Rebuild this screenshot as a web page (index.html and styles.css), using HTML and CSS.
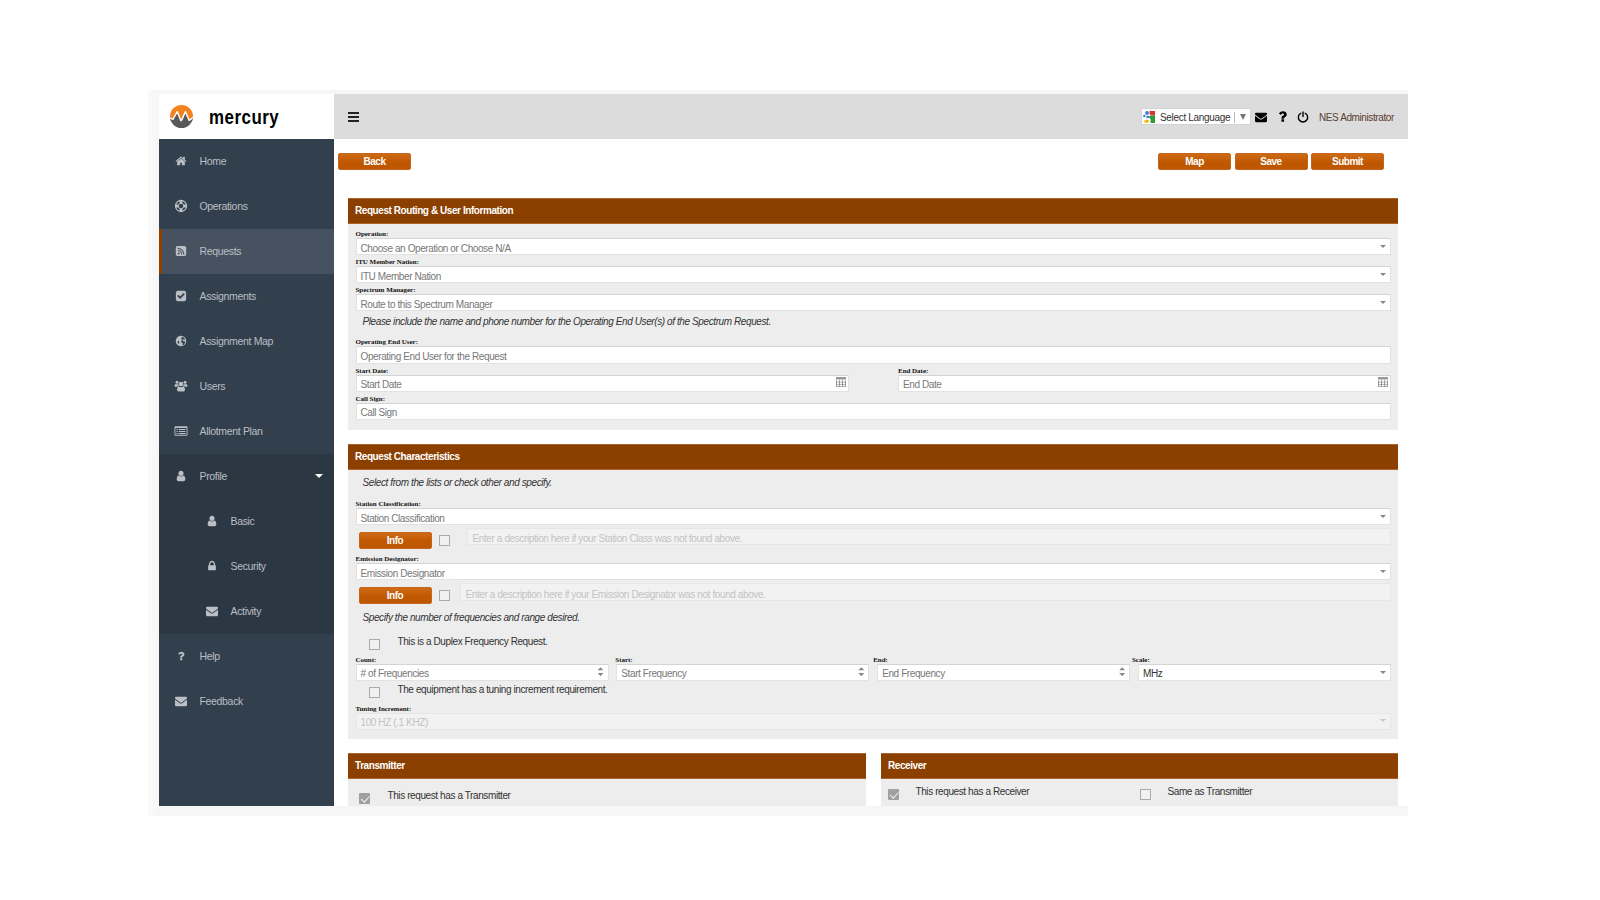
FILE: index.html
```
<!DOCTYPE html>
<html lang="en">
<head>
    <meta charset="UTF-8">
    <meta name="viewport" content="width=device-width, initial-scale=1.0">
    <title>Mercury - Spectrum Request</title>
    <link rel="stylesheet" href="styles.css">
</head>
<body>
    <!-- shared icons -->
    <svg class="sprite" viewBox="0 0 1792 1792">
        <symbol id="envelope" viewBox="0 0 1792 1792"><path d="M1792 710v794q0 66-47 113t-113 47h-1472q-66 0-113-47t-47-113v-794q44 49 101 87 362 246 497 345 57 42 92.5 65.5t94.5 48 110 24.5h2q51 0 110-24.5t94.5-48 92.5-65.5q170-123 498-345 57-39 100-87zm0-294q0 79-49 151t-122 123q-376 261-468 325-10 7-42.5 31t-54 38.5-52 32.5-57.5 27-50 9h-2q-23 0-50-9t-57.5-27-52-32.5-54-38.5-42.5-31q-91-64-262-182.5t-205-142.5q-62-42-117-115.5t-55-136.5q0-78 41.5-130t118.5-52h1472q65 0 112.5 47t47.5 113z"/></symbol>
        <symbol id="user" viewBox="0 0 1792 1792"><path d="M1536 1399q0 109-62.5 187t-150.5 78h-854q-88 0-150.5-78t-62.5-187q0-85 8.5-160.5t31.5-152 58.5-131 94-89 134.5-34.5q131 128 313 128t313-128q76 0 134.5 34.5t94 89 58.5 131 31.5 152 8.5 160.5zm-256-887q0 159-112.5 271.5t-271.5 112.5-271.5-112.5-112.5-271.5 112.5-271.5 271.5-112.5 271.5 112.5 112.5 271.5z"/></symbol>
        <symbol id="question" viewBox="0 0 1792 1792"><path d="M1088 1256v240q0 16-12 28t-28 12h-240q-16 0-28-12t-12-28v-240q0-16 12-28t28-12h240q16 0 28 12t12 28zm316-600q0 54-15.5 101t-35 76.5-55 59.5-57.5 43.5-61 35.5q-41 23-68.5 65t-27.5 67q0 17-12 32.5t-28 15.5h-240q-15 0-25.5-18.5t-10.5-37.5v-45q0-83 65-156.5t143-108.5q59-27 84-56t25-76q0-42-46.5-74t-107.5-32q-65 0-108 29-35 25-107 115-13 16-31 16-12 0-25-8l-164-125q-13-10-15.5-25t5.5-28q160-266 464-266 80 0 161 31t146 83 106 127.5 41 158.5z"/></symbol>
        <symbol id="calendar" viewBox="0 0 10 10"><path d="M0 0h10v2.4H0zM0 3.2h1v6.8H0zM3 3.2h1v6.8H3zM6 3.2h1v6.8H6zM9 3.2h1v6.8H9zM0 4.7h10v.8H0zM0 7h10v.8H0zM0 9.2h10v.8H0z"/></symbol>
    </svg>

    <div class="frame">
        <div class="app">
            <aside class="sidebar">
                <div class="brand">
                    <svg class="logo" viewBox="0 0 24 24">
                        <defs>
                            <clipPath id="disc"><circle cx="12" cy="12" r="12"/></clipPath>
                        </defs>
                        <g clip-path="url(#disc)">
                            <rect width="24" height="17" fill="#f58220"/>
                            <path d="M0 13.500l3 1.500L7.600 7l3.800 9 1.200-2L16 7l4 8.500 4-2.500v11H0z" fill="#58595b"/>
                            <path d="M-1 13l4 2L7.600 7l3.800 9.500 1.200-1.500L16 7l4 9 5-3.500" fill="none" stroke="#fff" stroke-width="1.500" stroke-linejoin="round"/>
                        </g>
                    </svg>
                    <span class="brand-name">mercury</span>
                </div>
                <nav class="menu">
                    <a class="item">
                        <svg class="icon" viewBox="0 0 1792 1792"><path d="M1472 992v480q0 26-19 45t-45 19h-384v-384h-256v384h-384q-26 0-45-19t-19-45v-480q0-1 .5-3t.5-3l575-474 575 474q1 2 1 6zm223-69l-62 74q-8 9-21 11h-3q-13 0-21-7l-692-577-692 577q-12 8-24 7-13-2-21-11l-62-74q-8-10-7-23.5t11-21.5l719-599q32-26 76-26t76 26l244 204v-195q0-14 9-23t23-9h192q14 0 23 9t9 23v408l219 182q10 8 11 21.5t-7 23.5z"/></svg>
                        Home
                    </a>
                    <a class="item">
                        <svg class="icon" viewBox="0 0 24 24"><g fill="none" stroke="currentColor"><circle cx="12" cy="12" r="11.2" stroke-width="2.2"/><circle cx="12" cy="12" r="5.6" stroke-width="2"/></g><path d="M8.500 2h7l-1.200 5H9.700zM8.500 22h7l-1.200-5H9.700zM2 8.500v7l5-1.200V9.700zM22 8.500v7l-5-1.200V9.700z"/></svg>
                        Operations
                    </a>
                    <a class="item active">
                        <svg class="icon" viewBox="0 0 24 24"><path fill-rule="evenodd" d="M5 2h14a3.400 3.400 0 0 1 3.400 3.400v13.200a3.400 3.400 0 0 1-3.400 3.400H5a3.400 3.400 0 0 1-3.400-3.400V5.400A3.400 3.400 0 0 1 5 2zM7.300 15.200a1.900 1.900 0 1 0 .01 0zM5.400 9.800v2.200a7 7 0 0 1 6.900 7h2.200a9.200 9.200 0 0 0-9.100-9.200zM5.400 5.500v2.200A11.300 11.300 0 0 1 16.600 19h2.200A13.500 13.500 0 0 0 5.400 5.500z"/></svg>
                        Requests
                    </a>
                    <a class="item">
                        <svg class="icon" viewBox="0 0 1792 1792"><path d="M813 1299l614-614q19-19 19-45t-19-45l-102-102q-19-19-45-19t-45 19l-467 467-211-211q-19-19-45-19t-45 19l-102 102q-19 19-19 45t19 45l358 358q19 19 45 19t45-19zm851-883v960q0 119-84.500 203.500t-203.500 84.500h-960q-119 0-203.500-84.500t-84.500-203.500v-960q0-119 84.500-203.500t203.500-84.500h960q119 0 203.500 84.500t84.500 203.500z"/></svg>
                        Assignments
                    </a>
                    <a class="item">
                        <svg class="icon" viewBox="0 0 24 24"><path fill-rule="evenodd" d="M12 1.500a10.500 10.500 0 1 0 .01 0zM14 3.500l4 2 2 3-1.500 1-2-1-2 1.500 1 2 3.500.500 1.500 2-2.500 4.500-3 2 .500-4-2.500-2.500-.500-3 1.500-3.500-1.500-1.500zM5 12l2 0 2 2-.500 2-1 2-2-3z"/></svg>
                        Assignment Map
                    </a>
                    <a class="item">
                        <svg class="icon" viewBox="0 0 24 24"><circle cx="4" cy="4.500" r="3"/><circle cx="20" cy="4.500" r="3"/><circle cx="12" cy="8" r="4.500"/><path d="M1 8q3 1.500 5.500-.2Q6.500 11 8.500 12.700H5.500q-2 0-3 1.300Q-1 14-1 11.500-1 9 1 8zM23 8q-3 1.500-5.500-.2.000 3.200-2 4.900h3q2 0 3 1.300 3.500 0 3.500-2.500Q25 9 23 8zM8 13q4 2.500 8 0 4 .500 4 6.500 0 3.500-3 3.500H7q-3 0-3-3.500Q4 13.500 8 13z"/></svg>
                        Users
                    </a>
                    <a class="item">
                        <svg class="icon" viewBox="0 0 24 24"><path fill-rule="evenodd" d="M1 2.500h22q2 0 2 2v15q0 2-2 2H1q-2 0-2-2v-15q0-2 2-2zM.800 6v13.700h22.400V6zM3 8h2.500v2H3zM3 12h2.500v2H3zM3 16h2.500v2H3zM7.500 8H21v2H7.500zM7.500 12H21v2H7.500zM7.500 16H21v2H7.500z"/></svg>
                        Allotment Plan
                    </a>
                    <div class="group">
                        <a class="item">
                            <svg class="icon"><use href="#user"/></svg>
                            Profile
                            <span class="caret"></span>
                        </a>
                        <a class="item sub">
                            <svg class="icon"><use href="#user"/></svg>
                            Basic
                        </a>
                        <a class="item sub">
                            <svg class="icon" viewBox="0 0 1792 1792"><path d="M640 768h512v-192q0-106-75-181t-181-75-181 75-75 181v192zm832 96v576q0 40-28 68t-68 28h-960q-40 0-68-28t-28-68v-576q0-40 28-68t68-28h32v-192q0-184 132-316t316-132 316 132 132 316v192h32q40 0 68 28t28 68z"/></svg>
                            Security
                        </a>
                        <a class="item sub">
                            <svg class="icon"><use href="#envelope"/></svg>
                            Activity
                        </a>
                    </div>
                    <a class="item">
                        <svg class="icon"><use href="#question"/></svg>
                        Help
                    </a>
                    <a class="item">
                        <svg class="icon"><use href="#envelope"/></svg>
                        Feedback
                    </a>
                </nav>
            </aside>

            <div class="main">
                <header class="topbar">
                    <div class="burger"><span></span><span></span><span></span></div>
                    <div class="language">
                        <svg class="google" viewBox="0 0 12 12">
                            <rect width="12" height="12" fill="#fff"/>
                            <path d="M6.500 0H12v4.500H8.500L6.500 3z" fill="#e0322b"/>
                            <path d="M7.500 4.500H12V12H7.500V8L5.500 6z" fill="#2e9b3b"/>
                            <circle cx="4" cy="2" r="1.900" fill="#3a7be0"/>
                            <circle cx="1.300" cy="5" r="1.200" fill="#3a7be0"/>
                            <path d="M3 5.500l3-1v2L4 7.500z" fill="#3a7be0"/>
                            <ellipse cx="3.600" cy="10.200" rx="2.500" ry="1.500" fill="#f5b400"/>
                        </svg>
                        <span class="language-text">Select Language</span>
                        <span class="language-arrow"></span>
                    </div>
                    <svg class="top-icon mail"><use href="#envelope"/></svg>
                    <svg class="top-icon help"><use href="#question"/></svg>
                    <svg class="top-icon power" viewBox="0 0 24 24"><path d="M7.500 4.500a9.300 9.300 0 1 0 9 0M12 2v9" fill="none" stroke="#000" stroke-width="2.800" stroke-linecap="round"/></svg>
                    <span class="username">NES Administrator</span>
                </header>

                <div class="toolbar">
                    <button class="btn">Back</button>
                    <div class="actions">
                        <button class="btn">Map</button>
                        <button class="btn">Save</button>
                        <button class="btn">Submit</button>
                    </div>
                </div>

                <section class="panel routing">
                    <h2>Request Routing &amp; User Information</h2>
                    <div class="panel-body">
                        <label>Operation:</label>
                        <div class="field select">Choose an Operation or Choose N/A</div>
                        <label>ITU Member Nation:</label>
                        <div class="field select">ITU Member Nation</div>
                        <label>Spectrum Manager:</label>
                        <div class="field select">Route to this Spectrum Manager</div>
                        <p class="hint wide-hint">Please include the name and phone number for the Operating End User(s) of the Spectrum Request.</p>
                        <label>Operating End User:</label>
                        <div class="field">Operating End User for the Request</div>
                        <div class="dates">
                            <div>
                                <label>Start Date:</label>
                                <div class="field">Start Date <svg class="calendar"><use href="#calendar"/></svg></div>
                            </div>
                            <div>
                                <label>End Date:</label>
                                <div class="field">End Date <svg class="calendar"><use href="#calendar"/></svg></div>
                            </div>
                        </div>
                        <label>Call Sign:</label>
                        <div class="field">Call Sign</div>
                    </div>
                </section>

                <section class="panel characteristics">
                    <h2>Request Characteristics</h2>
                    <div class="panel-body">
                        <p class="hint first-hint">Select from the lists or check other and specify.</p>
                        <label>Station Classification:</label>
                        <div class="field select">Station Classification</div>
                        <div class="other">
                            <button class="btn">Info</button>
                            <span class="check"></span>
                            <div class="field disabled station-other">Enter a description here if your Station Class was not found above.</div>
                        </div>
                        <label>Emission Designator:</label>
                        <div class="field select">Emission Designator</div>
                        <div class="other">
                            <button class="btn">Info</button>
                            <span class="check"></span>
                            <div class="field disabled emission-other">Enter a description here if your Emission Designator was not found above.</div>
                        </div>
                        <p class="hint range-hint">Specify the number of frequencies and range desired.</p>
                        <div class="check-row duplex">
                            <span class="check"></span>
                            <span class="check-text">This is a Duplex Frequency Request.</span>
                        </div>
                        <div class="range">
                            <div>
                                <label>Count:</label>
                                <div class="field spinner"># of Frequencies</div>
                            </div>
                            <div>
                                <label class="out">Start:</label>
                                <div class="field spinner">Start Frequency</div>
                            </div>
                            <div>
                                <label class="out-more">End:</label>
                                <div class="field spinner">End Frequency</div>
                            </div>
                            <div>
                                <label class="out-most">Scale:</label>
                                <div class="field select filled">MHz</div>
                            </div>
                        </div>
                        <div class="check-row tuning">
                            <span class="check"></span>
                            <span class="check-text">The equipment has a tuning increment requirement.</span>
                        </div>
                        <label>Tuning Increment:</label>
                        <div class="field select disabled tuning-value">100 HZ (.1 KHZ)</div>
                    </div>
                </section>

                <div class="columns">
                    <section class="panel">
                        <h2>Transmitter</h2>
                        <div class="panel-body equipment transmitter">
                            <span class="check checked"></span>
                            <span class="check-text">This request has a Transmitter</span>
                        </div>
                    </section>
                    <section class="panel">
                        <h2>Receiver</h2>
                        <div class="panel-body equipment receiver">
                            <span class="check checked"></span>
                            <span class="check-text">This request has a Receiver</span>
                            <span class="check"></span>
                            <span class="check-text">Same as Transmitter</span>
                        </div>
                    </section>
                </div>
            </div>
        </div>
    </div>
</body>
</html>
```

FILE: styles.css
```
* {
    box-sizing: border-box;
}
body {
    margin: 0;
    height: 900px;
    overflow: hidden;
    background: #fff;
    font-family: "Liberation Sans", Arial, sans-serif;
    font-size: 10px;
    letter-spacing: -0.4px;
}
.sprite {
    display: none;
}
.frame {
    width: 1260px;
    height: 726px;
    margin: 90px 0 0 148px;
    padding: 4px 0 10px 10.5px;
    background: linear-gradient(to right, #fafafa, #f6f6f6 11px);
}
.app {
    display: flex;
    height: 712px;
    overflow: hidden;
    background: #fff;
}

/* sidebar */
.sidebar {
    width: 175.5px;
    background: #323f4c;
}
.brand {
    display: flex;
    align-items: center;
    height: 45px;
    padding-left: 11px;
    background: #fff;
}
.logo {
    width: 23px;
    height: 23px;
}
.brand-name {
    margin: 1px 0 0 16px;
    font-size: 20px;
    font-weight: bold;
    letter-spacing: 0.6px;
    color: #000;
    transform: scaleX(0.845);
    transform-origin: left;
}
.item {
    display: flex;
    align-items: center;
    height: 45px;
    padding: 0 11px 1px 16.5px;
    font-size: 10.5px;
    letter-spacing: -0.33px;
    color: #b9bfc5;
}
.icon {
    width: 12px;
    height: 12px;
    margin-right: 12.5px;
    overflow: visible;
    fill: currentColor;
}
.item.active {
    padding-left: 13.5px;
    border-left: 3px solid #8b4000;
    background: #475260;
}
.group {
    background: #2c3744;
}
.item.sub {
    padding-left: 47.5px;
}
.caret {
    margin-left: auto;
    border: 4px solid transparent;
    border-top-color: #fff;
    border-bottom: 0;
}

/* top bar */
.main {
    flex: 1;
    min-width: 0;
}
.topbar {
    display: flex;
    align-items: center;
    height: 45px;
    padding: 0 14px 0 13.5px;
    background: #dcdcdc;
}
.burger span {
    display: block;
    width: 11px;
    height: 2px;
    margin: 2px 0;
    background: #222;
}
.language {
    display: flex;
    align-items: center;
    width: 110px;
    height: 17px;
    margin-left: auto;
    padding: 1px 0 0 1px;
    border: 1px solid #d2d2d2;
    background: #fff;
    color: #333;
}
.google {
    width: 12px;
    height: 12px;
}
.language-text {
    width: 75px;
    margin-left: 5px;
    border-right: 1px solid #bbb;
    letter-spacing: -0.32px;
}
.language-arrow {
    margin-left: 5px;
    border: 3px solid transparent;
    border-top: 6px solid #777;
    border-bottom: 0;
}
.top-icon {
    width: 12px;
    height: 12px;
}
.mail {
    margin-left: 4px;
}
.help {
    width: 15px;
    height: 15px;
    margin-left: 7.5px;
}
.power {
    width: 12px;
    margin-left: 7.5px;
}
.username {
    width: 75px;
    margin: 1px 0 0 10px;
    white-space: nowrap;
    color: #5a4030;
}

/* buttons */
.toolbar {
    display: flex;
    justify-content: space-between;
    padding: 14px 24px 0 4px;
}
.actions {
    display: flex;
    gap: 3.5px;
}
.btn {
    width: 73px;
    height: 17px;
    padding: 0;
    border: 1px solid #c4661c;
    border-radius: 2px;
    background: linear-gradient(#cf6a14, #bf5600 60%);
    color: #fff;
    font: bold 10px "Liberation Sans", Arial, sans-serif;
    letter-spacing: -0.5px;
}

/* panels */
.panel {
    background: #ededed;
}
.panel h2 {
    height: 26px;
    margin: 0;
    padding-left: 7px;
    border: 1px solid #a9652c;
    border-width: 1px 0;
    background: #8b4000;
    color: #fff;
    font-size: 10px;
    line-height: 24px;
    letter-spacing: -0.43px;
}
.panel-body {
    padding: 3px 7px 0 7.5px;
}
.routing {
    height: 232px;
    margin: 28px 10px 14px 14px;
}
.characteristics {
    height: 295px;
    margin: 0 10px 14px 14px;
}
label {
    display: block;
    height: 11px;
    color: #111;
    font: bold 7px/15px "Liberation Serif", "Times New Roman", serif;
    letter-spacing: -0.03px;
    white-space: nowrap;
}
.field {
    display: flex;
    align-items: center;
    height: 17.15px;
    padding: 3px 7px 0 4px;
    border: 1px solid #e2e2e2;
    border-top-color: #d4d4d4;
    background: #fff;
    color: #777;
    white-space: nowrap;
}
.select::after {
    content: "";
    margin: -3px -3px 0 auto;
    border: 3px solid transparent;
    border-top-color: #888;
    border-bottom: 0;
}
.filled {
    color: #333;
}
.disabled {
    background: #f2f2f2;
    border-color: #e6e6e6;
    color: #c3c3c3;
}
.disabled::after {
    border-top-color: #c8c8c8;
}
.spinner::after {
    content: "";
    width: 6px;
    height: 9px;
    margin: -4px -3px 0 auto;
    background: #888;
    clip-path: polygon(50% 0, 100% 35%, 0 35%, 0 65%, 100% 65%, 50% 100%, 0 65%, 0 35%);
}
.range .field,
.tuning-value {
    padding-top: 2px;
}
.calendar {
    width: 10px;
    height: 10px;
    margin: -4px -5px 0 auto;
    fill: #999;
}
.hint {
    margin: 0;
    padding-left: 7px;
    font-style: italic;
    color: #333;
}
.wide-hint {
    height: 24px;
    line-height: 21px;
}
.first-hint {
    height: 24px;
    line-height: 19px;
}
.dates {
    display: grid;
    grid-template-columns: 493px 493px;
    justify-content: space-between;
}
.dates .field {
    padding-top: 2px;
}

/* check boxes */
.check {
    flex: none;
    width: 11px;
    height: 11px;
    border: 1.5px solid #aaa;
    background: #f1f1f1;
}
.check.checked {
    border: 0;
    border-radius: 1px;
    background: #a0a0a0;
}
.checked::after {
    content: "";
    display: block;
    width: 3.5px;
    height: 6.5px;
    margin: 1.3px 0 0 4px;
    border: solid #f4f4f4;
    border-width: 0 1.5px 1.5px 0;
    transform: rotate(42deg);
}
.other {
    display: flex;
    height: 27.2px;
    padding-left: 3px;
}
.other .btn {
    margin-top: 7px;
}
.other .check {
    margin: 10px 0 0 7px;
}
.other .field {
    flex: 1;
    margin-top: 3px;
    padding-top: 4px;
    padding-left: 5px;
    letter-spacing: -0.39px;
}
.station-other {
    margin-left: 17px;
}
.emission-other {
    margin-left: 10px;
}
.range-hint {
    height: 21px;
    line-height: 20px;
}
.check-row {
    display: flex;
    gap: 17.5px;
    padding-left: 13.5px;
    color: #333;
}
.duplex {
    height: 24.5px;
    padding-top: 7.5px;
}
.tuning {
    height: 20.5px;
    padding-top: 3px;
}
.check-row .check {
    margin-top: 3px;
}
.range {
    display: grid;
    grid-template-columns: repeat(4, 253px);
    justify-content: space-between;
}
.out {
    margin-left: -1px;
}
.out-more {
    margin-left: -4px;
}
.out-most {
    margin-left: -6px;
}

/* transmitter / receiver */
.columns {
    display: grid;
    grid-template-columns: 518px 517px;
    justify-content: space-between;
    padding: 0 10px 0 14px;
}
.equipment {
    display: flex;
    height: 40px;
    color: #333;
}
.equipment .check {
    margin-top: 3px;
}
.equipment .check-text {
    margin-left: 17px;
}
.transmitter {
    padding: 11px 0 0 10.5px;
}
.transmitter .check {
    margin-top: 2.5px;
}
.transmitter .check-text {
    margin-left: 18px;
}
.receiver {
    padding: 6.5px 0 0 6.5px;
}
.receiver .check-text:nth-child(2) {
    width: 224px;
}
```
